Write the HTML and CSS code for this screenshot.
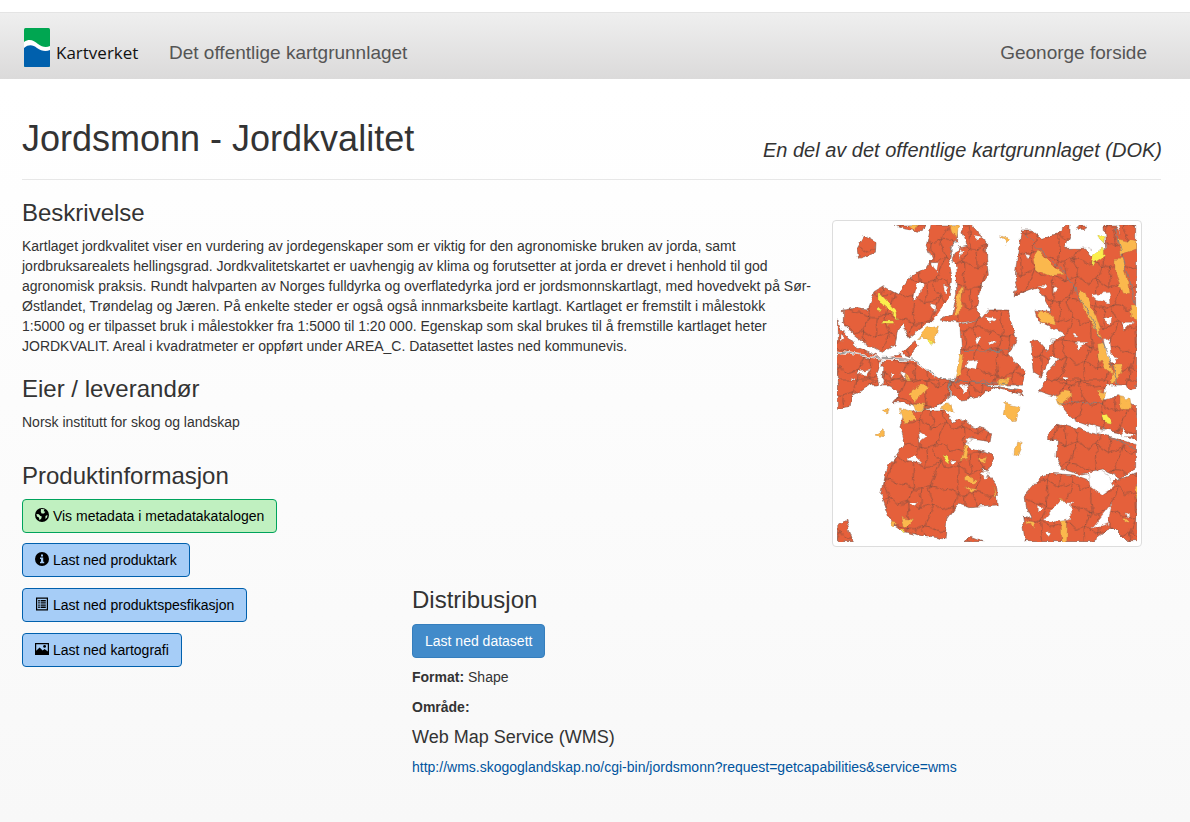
FILE: index.html
```html
<!DOCTYPE html>
<html lang="no">
<head>
<meta charset="utf-8">
<title>Jordsmonn - Jordkvalitet</title>
<link rel="stylesheet" href="styles.css">
</head>
<body>
<header class="topbar">
  <a class="brand" href="#">
    <svg class="brand-mark" viewBox="0 0 26 39" width="26" height="39" aria-hidden="true">
      <rect width="26" height="39" rx="1.5" fill="#00a651"/>
      <path d="M0 15 C6 11 10 14 14 17 C18 20 22 21 26 19 V37.5 Q26 39 24.5 39 H1.5 Q0 39 0 37.5Z" fill="#0060ad"/>
      <path d="M0 14 C6 10 10 13 14 16 C18 19 22 20 26 18 V22 C22 24 17 23 13 20 C9 17 5 16 0 20Z" fill="#fff"/>
    </svg>
    <span class="brand-name">Kartverket</span>
  </a>
  <a class="nav-link nav-title" href="#">Det offentlige kartgrunnlaget</a>
  <a class="nav-link nav-home" href="#">Geonorge forside</a>
</header>

<main class="page">
  <div class="page-title">
    <h1>Jordsmonn - Jordkvalitet</h1>
    <p class="subtitle">En del av det offentlige kartgrunnlaget (DOK)</p>
  </div>

  <figure class="thumb">
    <svg class="map" viewBox="837 225 300 317" width="300" height="317" role="img" aria-label="Kart over jordkvalitet">
      <defs>
        <pattern id="fields" patternUnits="userSpaceOnUse" width="96" height="88" patternTransform="scale(1.4) rotate(8)">
          <g fill="none" stroke="#5d4640" stroke-width="1.1">
            <path d="M0 24 C16 14 32 36 48 24 S80 14 96 24"/>
            <path d="M24 0 L30 24 L20 56 L24 88"/>
            <path d="M68 0 L60 26 L77 52 L68 88"/>
            <path d="M0 66 L20 56 L48 70 L77 52 L96 66"/>
            <path d="M45 25 C40 40 53 50 48 70"/>
          </g>
        </pattern>
        <filter id="rough" filterUnits="userSpaceOnUse" x="-50" y="-50" width="1200" height="700">
          <feTurbulence type="fractalNoise" baseFrequency=".035" numOctaves="3" seed="4" result="n"/>
          <feDisplacementMap in="SourceGraphic" in2="n" scale="22" xChannelSelector="R" yChannelSelector="G"/>
          <feGaussianBlur stdDeviation=".9"/>
        </filter>
        <g id="upper">
          <polygon points="95,95 115,60 150,80 148,115 125,122 100,130"/>
          <polygon points="210,30 300,30 290,50 240,42"/>
          <polygon points="55,285 90,280 128,285 150,230 175,215 218,238 262,180 300,160 320,130 305,90 318,30 395,30 398,75 380,100 372,135 380,185 372,250 340,300 250,370 230,330 218,345 210,390 175,415 120,385 70,345 55,320"/>
          <polygon points="400,95 425,90 410,30 440,30 470,65 485,75 485,130 490,180 470,210 455,290 470,310 405,325 345,315 380,295 395,235 392,170 385,130"/>
          <polygon points="37,310 50,345 95,395 172,430 155,490 160,510 37,510"/>
          <polygon points="175,435 220,420 270,440 340,490 385,510 170,510"/>
          <polygon points="230,415 270,380 280,395 255,425"/>
          <polygon points="405,330 470,310 490,285 545,285 560,330 575,370 555,420 600,470 590,510 390,510 410,410"/>
          <polygon points="575,140 590,45 620,45 650,70 700,55 735,30 735,60 720,100 770,100 800,130 845,95 840,30 935,30 935,510 660,510 670,470 700,435 680,420 650,485 625,470 615,380 640,375 665,405 690,375 720,360 640,320 630,285 680,290 640,215 600,230 565,250 565,230 580,225 570,190"/>
          <polygon points="755,30 785,30 780,40 760,40"/>
        </g>
        <g id="lower">
          <polygon points="37,0 155,0 100,40 80,45 75,80 37,85"/>
          <polygon points="178,0 375,0 365,65 300,90 260,70 205,68 225,40"/>
          <polygon points="375,0 590,30 595,45 500,20 470,50 410,60 375,40"/>
          <polygon points="235,105 280,90 355,90 385,130 410,115 440,140 500,155 495,185 430,175 420,195 500,225 505,245 490,275 470,265 515,320 520,375 430,380 400,370 365,420 360,480 300,470 240,455 200,430 170,345 185,260 205,240 240,190 225,140"/>
          <polygon points="640,30 665,0 850,0 835,60 880,50 935,80 935,185 880,155 810,140 740,115 720,90 700,50"/>
          <polygon points="900,0 935,0 935,25 915,30"/>
          <polygon points="665,165 700,130 780,152 850,168 935,198 935,260 890,295 840,270 770,285 710,265 690,230 695,175 665,180"/>
          <polygon points="600,345 640,300 670,280 750,285 790,300 830,340 870,300 935,280 935,485 905,485 860,440 800,485 600,485 590,405 620,420 605,390"/>
          <polygon points="37,440 62,420 85,485 37,485"/>
          <polygon points="415,485 440,472 475,485"/>
        </g>
      </defs>

      <g filter="url(#rough)" transform="translate(825 215) scale(.33333)">
        <use href="#upper" class="land"/>
        <use href="#upper" fill="url(#fields)"/>
        <g class="orange">
          <polygon points="625,130 640,105 680,150 715,175 665,180 630,165"/>
          <polygon points="760,225 780,235 810,300 835,375 810,340 775,280"/>
          <polygon points="815,390 845,385 860,480 840,465 820,430"/>
          <polygon points="870,130 895,130 915,235 895,235 870,170"/>
          <polygon points="915,270 935,270 935,320 920,310"/>
          <polygon points="880,70 935,80 935,100 885,120"/>
          <polygon points="245,480 270,510 240,510"/>
          <polygon points="400,230 410,215 405,290 385,305"/>
          <polygon points="405,420 420,420 410,470 390,490"/>
          <polygon points="300,340 340,330 330,385 300,375 280,370"/>
          <polygon points="640,290 680,295 695,330 650,325"/>
          <polygon points="525,495 555,490 545,510 520,510"/>
          <polygon points="865,450 895,450 875,500 860,510"/>
          <polygon points="370,30 400,30 395,70 375,50"/>
          <polygon points="530,65 555,75 545,85"/>
          <polygon points="250,30 280,30 270,45"/>
        </g>
        <g class="yellow">
          <polygon points="165,235 215,290 222,315 205,295 165,265"/>
          <polygon points="175,318 208,318 205,325 175,325"/>
          <polygon points="805,120 835,95 835,125 800,150"/>
          <polygon points="815,65 840,65 840,80 820,80"/>
          <polygon points="150,283 170,283 165,290 150,288"/>
          <polygon points="300,375 325,380 315,392"/>
        </g>
        <g class="holes">
          <polygon points="600,115 612,118 606,130"/>
          <polygon points="640,208 665,208 660,218"/>
          <polygon points="685,215 700,218 685,235"/>
          <polygon points="800,240 850,235 855,265 815,255"/>
          <polygon points="835,310 860,305 858,325"/>
          <polygon points="890,325 920,325 900,345"/>
          <polygon points="745,355 760,365 745,370"/>
          <polygon points="680,370 690,372 680,382"/>
          <polygon points="750,385 790,385 760,400"/>
          <polygon points="835,375 855,372 860,420 880,425 870,445 845,425"/>
          <polygon points="715,485 730,488 722,505"/>
          <polygon points="770,95 800,100 790,120"/>
          <polygon points="870,30 880,30 885,60"/>
          <polygon points="320,140 340,140 335,175"/>
          <polygon points="275,205 290,205 285,240 265,260"/>
          <polygon points="355,210 370,215 360,235"/>
          <polygon points="315,265 335,270 330,290"/>
          <polygon points="45,360 58,370 45,382"/>
          <polygon points="100,470 140,465 130,480 95,478"/>
          <polygon points="225,475 245,480 240,495"/>
          <polygon points="450,368 470,372 455,385"/>
          <polygon points="495,378 515,380 500,392"/>
          <polygon points="430,435 455,430 450,465 425,460"/>
          <polygon points="480,305 515,312 495,325"/>
          <polygon points="75,490 90,495 80,505"/>
          <polygon points="195,470 208,475 200,490"/>
          <polygon points="400,100 415,105 410,130"/>
          <polygon points="445,60 470,65 460,75"/>
        </g>
        <path class="road-white" d="M385,140 C395,200 385,250 340,300 L225,415"/>
        <path class="road-white" d="M37,410 L170,430 L262,432 L330,485"/>
        <path class="road-grey" d="M37,410 L170,430 L262,432 L330,485"/>
        <path class="road-grey" d="M600,60 L720,175 L800,310 L850,420 L880,510"/>
        <path class="road-grey" d="M870,40 L935,270"/>
        <path class="road-grey" d="M405,410 L555,405"/>
        <path class="road-grey" d="M340,490 L590,510"/>
        <path class="road-grey" d="M385,140 L375,100 L400,80"/>
      </g>

      <g filter="url(#rough)" transform="translate(825 380) scale(.33333)">
        <use href="#lower" class="land"/>
        <use href="#lower" fill="url(#fields)"/>
        <g class="orange">
          <polygon points="250,40 290,15 310,20 270,65"/>
          <polygon points="265,70 300,72 295,90 270,88"/>
          <polygon points="345,85 375,70 385,100"/>
          <polygon points="170,90 195,90 190,105 172,100"/>
          <polygon points="225,85 260,95 270,120 240,125"/>
          <polygon points="150,165 175,145 175,170"/>
          <polygon points="540,70 585,80 570,125 535,100"/>
          <polygon points="575,180 592,185 582,230 570,225"/>
          <polygon points="460,235 485,230 480,250"/>
          <polygon points="425,285 455,300 450,310 425,300"/>
          <polygon points="420,320 460,325 440,335"/>
          <polygon points="505,320 515,350 510,355"/>
          <polygon points="195,425 215,430 205,440"/>
          <polygon points="230,415 270,420 240,440"/>
          <polygon points="600,425 630,430 625,445"/>
          <polygon points="705,418 725,418 722,485 708,485"/>
          <polygon points="885,50 915,55 920,85 885,85"/>
          <polygon points="820,30 850,35 830,65"/>
          <polygon points="690,50 720,35 745,40 700,75"/>
          <polygon points="520,0 550,0 540,12 520,12"/>
          <polygon points="895,410 915,425 900,430"/>
          <polygon points="925,325 935,320 935,355"/>
          <polygon points="420,200 432,195 425,235 405,240"/>
          <polygon points="700,360 735,370 700,365"/>
        </g>
        <g class="yellow">
          <polygon points="355,225 365,225 372,250 360,240"/>
          <polygon points="830,105 845,100 860,130 835,125"/>
          <polygon points="228,445 245,450 240,460"/>
        </g>
        <g class="holes">
          <polygon points="655,420 700,365 740,365 740,420 690,425"/>
          <polygon points="790,275 840,275 865,320 830,345 795,320"/>
          <polygon points="800,445 860,370 850,430"/>
          <polygon points="660,455 680,455 675,470"/>
          <polygon points="250,370 275,365 270,380"/>
          <polygon points="270,225 295,250 250,240"/>
          <polygon points="420,175 445,180 430,190"/>
          <polygon points="280,155 305,170 285,185"/>
          <polygon points="375,240 400,240 380,255"/>
          <polygon points="900,395 915,400 905,410"/>
          <polygon points="640,375 655,385 640,395"/>
          <polygon points="470,280 490,280 480,300"/>
          <polygon points="890,145 930,170 895,170"/>
          <polygon points="810,140 840,150 815,160"/>
          <polygon points="405,15 435,20 415,40"/>
        </g>
        <path class="road-grey" d="M375,0 L370,60"/>
        <path class="road-grey" d="M700,65 L830,75"/>
        <path class="road-grey" d="M850,170 L935,210"/>
        <path class="road-grey" d="M375,0 L590,30"/>
      </g>
    </svg>
  </figure>

  <section class="description">
    <h2>Beskrivelse</h2>
    <p>Kartlaget jordkvalitet viser en vurdering av jordegenskaper som er viktig for den agronomiske bruken av jorda, samt jordbruksarealets hellingsgrad. Jordkvalitetskartet er uavhengig av klima og forutsetter at jorda er drevet i henhold til god agronomisk praksis. Rundt halvparten av Norges fulldyrka og overflatedyrka jord er jordsmonnskartlagt, med hovedvekt på Sør-Østlandet, Trøndelag og Jæren. På enkelte steder er også også innmarksbeite kartlagt. Kartlaget er fremstilt i målestokk 1:5000 og er tilpasset bruk i målestokker fra 1:5000 til 1:20 000. Egenskap som skal brukes til å fremstille kartlaget heter JORDKVALIT. Areal i kvadratmeter er oppført under AREA_C. Datasettet lastes ned kommunevis.</p>
    <h2 class="owner-heading">Eier / leverandør</h2>
    <p>Norsk institutt for skog og landskap</p>
  </section>

  <section class="product">
    <h2>Produktinformasjon</h2>
    <a class="btn btn-green" href="#">
      <svg class="ico" viewBox="0 0 14 14" aria-hidden="true"><circle cx="7" cy="7" r="7"/><path fill="#c0f0c0" d="M6 1 L9.5 1.2 L8.6 3.2 L10.3 3.7 L9 5.5 L6.6 5.4 L5.8 3.8 Z M1.4 6 L3.8 6.3 L5.4 8 L6.8 8.4 L6.3 10.6 L4.6 12.2 L3.9 9.6 L2 8.6 Z M10.5 8 L12.5 7 L12 9.6 L10.4 11 Z"/></svg>
      Vis metadata i metadatakatalogen
    </a>
    <a class="btn btn-blue" href="#">
      <svg class="ico" viewBox="0 0 14 14" aria-hidden="true"><circle cx="7" cy="7" r="7"/><path fill="#a6cdf7" d="M6 2.6 H8 V4.4 H6Z M5 5.6 H8.2 V9.8 H9.2 V11.2 H5 V9.8 H6 V7 H5Z"/></svg>
      Last ned produktark
    </a>
    <a class="btn btn-blue" href="#">
      <svg class="ico" viewBox="0 0 14 14" aria-hidden="true"><path fill-rule="evenodd" d="M1 0.5 H13 V13.5 H1Z M2.2 1.7 V12.3 H11.8 V1.7Z"/><path d="M3.2 3 H4.8 V4.4 H3.2Z M5.6 3 H10.8 V4.4 H5.6Z M3.2 5.2 H4.8 V6.6 H3.2Z M5.6 5.2 H10.8 V6.6 H5.6Z M3.2 7.4 H4.8 V8.8 H3.2Z M5.6 7.4 H10.8 V8.8 H5.6Z M3.2 9.6 H4.8 V11 H3.2Z M5.6 9.6 H10.8 V11 H5.6Z"/></svg>
      Last ned produktspesfikasjon
    </a>
    <a class="btn btn-blue" href="#">
      <svg class="ico" viewBox="0 0 14 14" aria-hidden="true"><path fill-rule="evenodd" d="M0 1 H14 V13 H0Z M1.2 2.2 V8.8 L4.6 5.4 L7.6 8.6 L9.6 7 L12.8 9.6 V2.2Z"/><circle cx="9.6" cy="4.4" r="1.4"/></svg>
      Last ned kartografi
    </a>
  </section>

  <section class="distribution">
    <h2>Distribusjon</h2>
    <a class="btn btn-primary" href="#">Last ned datasett</a>
    <p><strong>Format:</strong> Shape</p>
    <p><strong>Område:</strong></p>
    <h3>Web Map Service (WMS)</h3>
    <p><a class="wms-link" href="#">http://wms.skogoglandskap.no/cgi-bin/jordsmonn?request=getcapabilities&amp;service=wms</a></p>
  </section>
</main>
</body>
</html>
```

FILE: styles.css
```css
* { box-sizing: border-box; }

html, body { margin: 0; height: 100%; }

body {
  min-height: 822px;
  padding-top: 12px;
  overflow: hidden;
  font-family: "Liberation Sans", Arial, sans-serif;
  font-size: 14px;
  line-height: 20px;
  color: #333;
  background: linear-gradient(to bottom, #fff 0, #fff 90px, #f8f8f8 100%);
}

a { text-decoration: none; }

.topbar {
  display: flex;
  align-items: center;
  height: 67px;
  padding: 0 43px 0 24px;
  background: linear-gradient(to bottom, #efefef 0, #dbdada 100%);
  border-top: 1px solid #e4e4e4;
}

.brand {
  display: flex;
  align-items: flex-end;
  width: 145px;
  color: #111;
  padding-top: 3px;
}

.brand-mark { display: block; margin-right: 6px; }

.brand-name {
  font-family: "Open Sans", sans-serif;
  font-size: 17px;
  line-height: 20px;
  margin-bottom: 4px;
}

.nav-link {
  margin-top: 13px;
  font-size: 19px;
  line-height: 24px;
  color: #555;
}

.nav-home { margin-left: auto; }

.page { padding: 0 29px 0 22px; }

.page::after { content: ""; display: block; clear: both; }

.page-title {
  display: flex;
  justify-content: space-between;
  align-items: flex-end;
  height: 101px;
  padding-bottom: 18px;
  margin-bottom: 20px;
  border-bottom: 1px solid #e7e7e7;
}

h1 {
  margin: 0 0 2px;
  font-size: 36px;
  line-height: 40px;
  font-weight: 500;
}

.subtitle {
  margin: 0 -1px 0 0;
  font-size: 20px;
  line-height: 22px;
  font-style: italic;
}

h2 {
  margin: 0 0 10px;
  font-size: 24px;
  line-height: 26px;
  font-weight: 500;
}

h3 {
  margin: 10px 0;
  font-size: 18px;
  line-height: 20px;
  font-weight: 500;
}

p { margin: 0 0 10px; }

.description { float: left; width: 789.5px; }

.owner-heading { margin-top: 20px; }

.thumb {
  float: right;
  width: 310px;
  height: 327px;
  margin: 20px 19px 0 0;
  padding: 4px;
  background: #fff;
  border: 1px solid #ddd;
  border-radius: 4px;
}

.map { display: block; }

.land { fill: #e5603a; stroke: #6b5048; stroke-width: 1.5; }

.orange polygon { fill: #fbb84e; stroke: #a77a48; stroke-width: 1; }

.yellow polygon { fill: #fcee4e; stroke: #a79a48; stroke-width: 1; }

.holes polygon { fill: #fff; stroke: #8a6a60; stroke-width: 1; }

.road-white { fill: none; stroke: #fff; stroke-width: 7; }

.road-grey { fill: none; stroke: #84807e; stroke-width: 2.6; }

.product {
  float: left;
  clear: left;
  width: 390px;
  margin-top: 21px;
}

.product h2 { margin-bottom: 9.8px; }

.btn {
  display: table;
  height: 34px;
  padding: 6px 12px;
  margin-bottom: 10.6px;
  font-size: 14px;
  line-height: 20px;
  color: #000;
  white-space: nowrap;
  border: 1px solid transparent;
  border-radius: 4px;
}

.btn-green { background: #c0f0c0; border-color: #00a35c; }

.btn-blue { background: #a6cdf7; border-color: #0060ad; }

.btn-primary {
  margin-bottom: 9px;
  color: #fff;
  background: #428bca;
  border-color: #357ebd;
}

.ico {
  display: inline-block;
  width: 14px;
  height: 14px;
  vertical-align: -1px;
}

.distribution {
  float: left;
  clear: right;
  width: 600px;
  margin-top: 40px;
}

.distribution h2 { margin-bottom: 11px; }

.wms-link { color: #00549e; }
```
